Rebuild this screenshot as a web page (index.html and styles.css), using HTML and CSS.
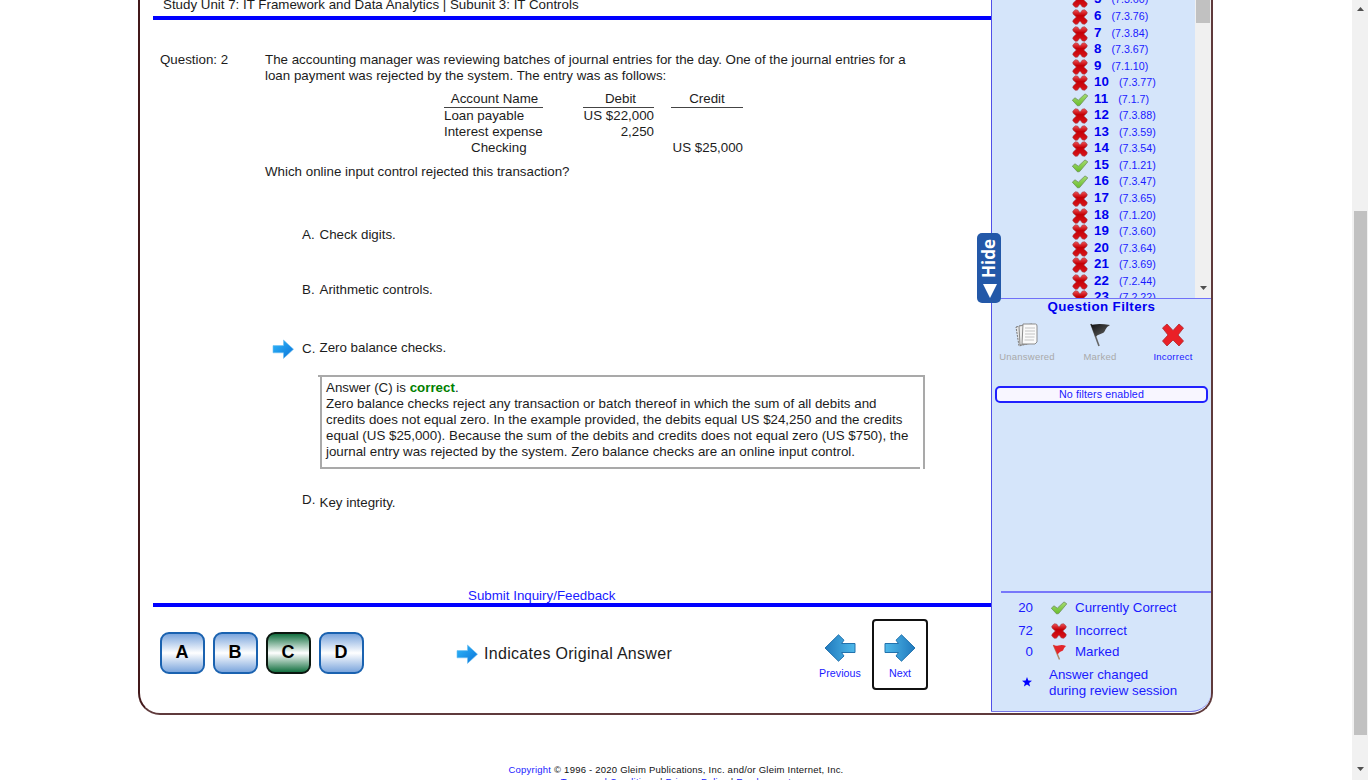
FILE: index.html
```html
<!DOCTYPE html>
<html lang="en">
<head>
<meta charset="utf-8">
<title>Review Session</title>
<link rel="stylesheet" href="styles.css">
</head>
<body>
<svg class="defs" width="0" height="0">
  <defs>
    <linearGradient id="red" x1="0" y1="0" x2="0" y2="1"><stop offset="0" stop-color="#ee5055"/><stop offset=".4" stop-color="#c40006"/><stop offset="1" stop-color="#d8151b"/></linearGradient>
    <linearGradient id="green" x1="0" y1="0" x2="0" y2="1"><stop offset="0" stop-color="#a5dc72"/><stop offset="1" stop-color="#68bd2b"/></linearGradient>
    <linearGradient id="sky" x1="0" y1="0" x2="1" y2="1"><stop offset="0" stop-color="#2fb8fa"/><stop offset="1" stop-color="#0a72d8"/></linearGradient>
    <linearGradient id="nav" x1="0" y1="0" x2="1" y2="0"><stop offset="0" stop-color="#4fb9ea"/><stop offset="1" stop-color="#2079bd"/></linearGradient>
    <linearGradient id="coal" x1="0" y1="0" x2="1" y2="1"><stop offset="0" stop-color="#111"/><stop offset="1" stop-color="#666"/></linearGradient>
    <symbol id="cross" viewBox="0 0 16 16"><path d="M.8 3 3.2.8 5.6 1 8 4 10.400 1 12.800.8 15.200 3 15 5 11.800 8 15.200 11.200 15 13.200 12.800 15.300 10.400 15 8 12 5.400 15.200 3.200 15.300.8 13 1 11.200 4.300 8 1 5Z" fill="url(#red)" stroke="#a04a50" stroke-width=".6" stroke-linejoin="round"/></symbol>
    <symbol id="check" viewBox="0 0 16 14"><path d="M.3 7.200 3 4.800 6.300 7.200 13 .9 15.800 2.800 7.600 12.600 5.600 12.900Z" fill="url(#green)" stroke="#6f8f5c" stroke-width=".8" stroke-linejoin="round"/></symbol>
    <symbol id="arrow" viewBox="0 0 22 20"><path d="M1 6.600H11.500V1L21.500 10.200 11.500 19.400V13.800H1Z" fill="url(#sky)" stroke="#6fc0f2" stroke-width=".6"/></symbol>
    <symbol id="navarrow" viewBox="0 0 32 28"><path d="M1 9.500H14.500L12 6.200 17.500.8 31 14 17.500 27.200 12 22 14.500 18.500H1Z" fill="url(#nav)" stroke="#2272ad" stroke-width="1"/></symbol>
  </defs>
</svg>
<div class="page">
  <div class="frame">
    <main class="main">
      <div class="unit"><span>Study Unit 7: IT Framework and Data Analytics | Subunit 3: IT Controls</span></div>
      <section class="question">
        <div class="qnum">Question: 2</div>
        <div class="stem">
          <p>The accounting manager was reviewing batches of journal entries for the day. One of the journal entries for a<br>loan payment was rejected by the system. The entry was as follows:</p>
          <div class="ledger">
            <div class="col name"><b>Account Name</b><span>Loan payable</span><span>Interest expense</span><span class="mid">Checking</span></div>
            <div class="col debit"><b>Debit</b><span>US $22,000</span><span>2,250</span></div>
            <div class="col credit"><b>Credit</b><span>&nbsp;</span><span>&nbsp;</span><span>US $25,000</span></div>
          </div>
          <p>Which online input control rejected this transaction?</p>
        </div>
      </section>
      <section class="choices">
        <div class="choice a"><i></i><em>A.</em><span>Check digits.</span></div>
        <div class="choice b"><i></i><em>B.</em><span>Arithmetic controls.</span></div>
        <div class="choice c"><i><svg width="22" height="20"><use href="#arrow"/></svg></i><em>C.</em><span>Zero balance checks.</span></div>
        <div class="explain">Answer (C) is <strong>correct</strong>.<br>Zero balance checks reject any transaction or batch thereof in which the sum of all debits and<br>credits does not equal zero. In the example provided, the debits equal US $24,250 and the credits<br>equal (US $25,000). Because the sum of the debits and credits does not equal zero (US $750), the<br>journal entry was rejected by the system. Zero balance checks are an online input control.</div>
        <div class="choice d"><i></i><em>D.</em><span>Key integrity.</span></div>
      </section>
      <div class="inquiry"><a>Submit Inquiry/Feedback</a></div>
      <div class="controls">
        <div class="letters"><button>A</button><button>B</button><button class="right">C</button><button>D</button></div>
        <div class="legend"><svg width="22" height="20"><use href="#arrow"/></svg><span>Indicates Original Answer</span></div>
        <div class="nav"><svg class="flip" width="32" height="28"><use href="#navarrow"/></svg><span>Previous</span></div>
        <div class="nav focus"><svg width="32" height="28"><use href="#navarrow"/></svg><span>Next</span></div>
      </div>
    </main>
    <aside class="side">
      <div class="hide"><span>Hide</span><svg width="14" height="14"><path d="M0 0H14L7 14Z" fill="#fff"/></svg></div>
      <div class="list">
        <div class="rows">
          <div class="row"><svg><use href="#cross"/></svg><b>5</b><span>(7.3.60)</span></div>
          <div class="row"><svg><use href="#cross"/></svg><b>6</b><span>(7.3.76)</span></div>
          <div class="row"><svg><use href="#cross"/></svg><b>7</b><span>(7.3.84)</span></div>
          <div class="row"><svg><use href="#cross"/></svg><b>8</b><span>(7.3.67)</span></div>
          <div class="row"><svg><use href="#cross"/></svg><b>9</b><span>(7.1.10)</span></div>
          <div class="row"><svg><use href="#cross"/></svg><b>10</b><span>(7.3.77)</span></div>
          <div class="row"><svg><use href="#check"/></svg><b>11</b><span>(7.1.7)</span></div>
          <div class="row"><svg><use href="#cross"/></svg><b>12</b><span>(7.3.88)</span></div>
          <div class="row"><svg><use href="#cross"/></svg><b>13</b><span>(7.3.59)</span></div>
          <div class="row"><svg><use href="#cross"/></svg><b>14</b><span>(7.3.54)</span></div>
          <div class="row"><svg><use href="#check"/></svg><b>15</b><span>(7.1.21)</span></div>
          <div class="row"><svg><use href="#check"/></svg><b>16</b><span>(7.3.47)</span></div>
          <div class="row"><svg><use href="#cross"/></svg><b>17</b><span>(7.3.65)</span></div>
          <div class="row"><svg><use href="#cross"/></svg><b>18</b><span>(7.1.20)</span></div>
          <div class="row"><svg><use href="#cross"/></svg><b>19</b><span>(7.3.60)</span></div>
          <div class="row"><svg><use href="#cross"/></svg><b>20</b><span>(7.3.64)</span></div>
          <div class="row"><svg><use href="#cross"/></svg><b>21</b><span>(7.3.69)</span></div>
          <div class="row"><svg><use href="#cross"/></svg><b>22</b><span>(7.2.44)</span></div>
          <div class="row"><svg><use href="#cross"/></svg><b>23</b><span>(7.2.22)</span></div>
        </div>
        <div class="track"><div class="thumb"></div><svg width="7" height="4"><path d="M0 0H7L3.500 4Z" fill="#505050"/></svg></div>
      </div>
      <h2>Question Filters</h2>
      <div class="filters">
        <div class="filter"><svg width="24" height="24" viewBox="0 0 24 24"><path d="M1 4 9 2 12 21 4 23Z" fill="#e4e4e4" stroke="#777" stroke-dasharray="2 1"/><path d="M4 3 17 1 18 20 5 22Z" fill="#eee" stroke="#888"/><path d="M8 1H20.500Q22 1 22 3V19L20 21H7Z" fill="#fafafa" stroke="#8b8b8b"/><path d="M10 5H20M10 8H20M10 11H20M10 14H19.500M9.500 17H19" stroke="#c4c4c4"/></svg><span>Unanswered</span></div>
        <div class="filter"><svg width="24" height="24" viewBox="0 0 24 24"><path d="M3 1 11 23" stroke="#666" stroke-width="1.600"/><path d="M2.500 1Q4 2 6 1.500Q12 .5 22 2Q18.500 3.500 17.500 6.500Q16.500 10 12.500 11Q9 12 7.500 14Z" fill="url(#coal)"/></svg><span>Marked</span></div>
        <div class="filter on"><svg width="24" height="24" viewBox="0 0 24 24"><path d="M1.500 5 6 1 12 7.500 18 1 22.500 5 17 12 22.500 18 18 23 12 17 6 23 1.500 18 7 12Z" fill="#ea2027" stroke="#ad272b" stroke-width=".8" stroke-linejoin="round"/></svg><span>Incorrect</span></div>
      </div>
      <div class="none">No filters enabled</div>
      <div class="totals">
        <div class="total"><b>20</b><svg><use href="#check"/></svg><span>Currently Correct</span></div>
        <div class="total two"><b>72</b><svg><use href="#cross"/></svg><span>Incorrect</span></div>
        <div class="total three"><b>0</b><svg viewBox="0 0 16 16"><path d="M2.500 1 8.500 15.500" stroke="#b08a68" stroke-width="1.500"/><path d="M2 .8Q4.500 2.500 7.500 1.500 11.500 .5 15 2 12.500 4 12 6.500 8.500 7.500 6.500 10.500Z" fill="#e3262b"/></svg><span>Marked</span></div>
        <div class="changed"><svg width="10" height="10" viewBox="0 0 10 10"><path d="M5 0 6.300 3.500 10 3.700 7.100 6 8.100 9.600 5 7.500 1.900 9.600 2.900 6 0 3.700 3.700 3.500Z" fill="#00f"/></svg><p>Answer changed<br>during review session</p></div>
      </div>
    </aside>
  </div>
  <footer><a>Copyright</a> © 1996 - 2020 Gleim Publications, Inc. and/or Gleim Internet, Inc.<br><a>Terms and Conditions</a> | <a>Privacy Policy</a> | <a>Employment</a></footer>
</div>
<div class="scroll"><svg width="7" height="4"><path d="M0 4H7L3.500 0Z" fill="#505050"/></svg><div class="bar"></div><svg width="7" height="4"><path d="M0 0H7L3.500 4Z" fill="#505050"/></svg></div>
</body>
</html>
```
FILE: styles.css
```css
*{box-sizing:border-box}
body{margin:0;height:780px;overflow:hidden;display:flex;background:#fff;color:#1c1c1c;font:13.333px/16px "Liberation Sans",Arial,sans-serif}
p,h2{margin:0}
.defs{position:absolute}
a{color:#1a1aff}
.page{width:1352px;height:780px;overflow:hidden}
.frame{display:flex;width:1075px;height:715px;margin-left:138px;border:2px solid #5f3a3c;border-top:0;border-left-color:#43191b;border-radius:0 0 22px 22px}
.main{width:851px;padding-left:13px;display:flex;flex-direction:column}
.unit{height:20px;border-bottom:4px solid #00f;padding-left:10px}
.unit span{display:block;width:max-content;margin-top:-3px}
.question{display:flex;height:173px;padding:32px 0 0 7px}
.qnum{width:105px}
.stem{white-space:nowrap}
.ledger{display:flex;margin:7px 0 8px 179px}
.col{display:flex;flex-direction:column;text-align:right}
.col b{font-weight:400;text-align:center;height:17px;border-bottom:1px solid #444}
.name{width:99px;text-align:left}
.name b{padding-left:2px}
.name .mid{padding-left:27px}
.debit{width:71px;margin-left:40px}
.debit b{padding-left:4px}
.credit{width:72px;margin-left:17px}
.choices{height:394px;padding:34px 0 0 119px}
.choice{display:flex;height:16px}
.choice i{width:22px;height:20px;margin-right:8px}
.choice em{font-style:normal;width:17.500px}
.b{margin-top:39px}
.c{margin-top:42px}
.c i svg{margin-top:-1px}
.c em{margin-top:1px}
.explain{position:relative;margin:19px 0 0 48px;width:605px;height:94px;padding:3px 0 0 4px;border:2px solid #a9a9a9;white-space:nowrap}
.explain::before{content:"";position:absolute;left:-4px;top:-2px;width:3px;height:2px;background:#a9a9a9}
.explain::after{content:"";position:absolute;right:0;bottom:-2px;width:3px;height:2px;background:#fff}
.explain strong{color:#008000}
.d{margin-top:23px}
.d span{margin-top:3px}
.inquiry{height:20px;padding:1px 0 0 315px;line-height:15px;border-bottom:4px solid #00f}
.controls{display:flex;padding:12px 0 0 6.500px}
.letters{display:flex;gap:8px;padding-top:13px}
button{width:45px;height:42px;border:2px solid #1a62b0;border-radius:9px;background:linear-gradient(#7ca6dd,#fff 50%,#7ca6dd);font:bold 18px/36px "Liberation Sans",Arial,sans-serif;padding:0 0 2px;color:#000}
.right{border-color:#0b160f;background:linear-gradient(#137040,#fff 50%,#137040)}
.legend{display:flex;margin-left:92.500px;width:356px;padding-top:25px;font-size:16px;line-height:20px;gap:6px;letter-spacing:.3px}
.nav{width:56px;height:71px;display:flex;flex-direction:column;align-items:center;padding-top:15px;font-size:10.667px;line-height:14px;gap:4px;color:#1a1aff;letter-spacing:.06px}
.focus{border:2px solid #111;border-radius:4px;margin-left:4px;padding-top:13px}
.flip{transform:scaleX(-1)}
.side{position:relative;width:220px;height:712px;background:#d5e5fa;border-left:1px solid #5050e8;border-bottom:1px solid #7777e8;border-radius:0 0 20px 0;color:#1a1aff}
.hide{position:absolute;left:-15px;top:233px;width:24px;height:70px;border-radius:5px;background:#2358a8;color:#fff;font:bold 17px/24px "Open Sans",sans-serif}
.hide span{position:absolute;left:0;top:5px;height:40px;writing-mode:vertical-rl;transform:rotate(180deg)}
.hide svg{position:absolute;left:6px;top:51px}
.list{display:flex;height:299px;overflow:hidden;border-bottom:1px solid #7070f8}
.rows{width:203px;padding-left:80px;margin-top:-8.600px}
.row{display:flex;height:16.560px}
.row svg{width:16px;height:16px;margin-top:1px}
.row b{color:#0000f0;margin-left:6px;letter-spacing:.08px}
.row span{font-size:10.667px;margin-left:10px}
.track{width:16px;background:#f0f0f0;display:flex;flex-direction:column;align-items:center;justify-content:space-between;padding-bottom:8px}
.thumb{width:14px;height:23px;background:#c1c1c1}
h2{font-size:13.333px;text-align:center;color:#0000f0;letter-spacing:.4px}
.filters{display:flex;padding-top:8px;margin-left:-1.500px}
.filter{width:73px;display:flex;flex-direction:column;align-items:center;font-size:9.500px;line-height:12px;gap:4px;color:#a9a9a9;letter-spacing:.24px}
.on{color:#1a1aff}
.none{width:213px;height:17px;margin:23px 0 0 3px;border:2px solid #2020ff;border-radius:5px;background:#f8f6ff;text-align:center;font-size:10.667px;line-height:12px;letter-spacing:.11px}
.totals{margin:188px 0 0 9px;border-top:2px solid #7777fa;padding-top:7px}
.total{display:flex}
.total b{font-weight:400;width:32px;text-align:right}
.total svg{width:16px;height:16px;margin:0 8px 0 18px}
.two{margin-top:7px}
.three{margin-top:5px}
.changed{display:flex;margin-top:7px;padding-left:21px;gap:17px}
.changed svg{margin-top:10px}
footer{text-align:center;margin-top:49px;font-size:9.500px;line-height:12px;color:#111;letter-spacing:.223px}
.scroll{width:16px;background:#f1f1f1;display:flex;flex-direction:column;align-items:center;padding-top:7px}
.bar{width:13px;height:524px;background:#c1c1c1;margin:200px 0 32px}
```
